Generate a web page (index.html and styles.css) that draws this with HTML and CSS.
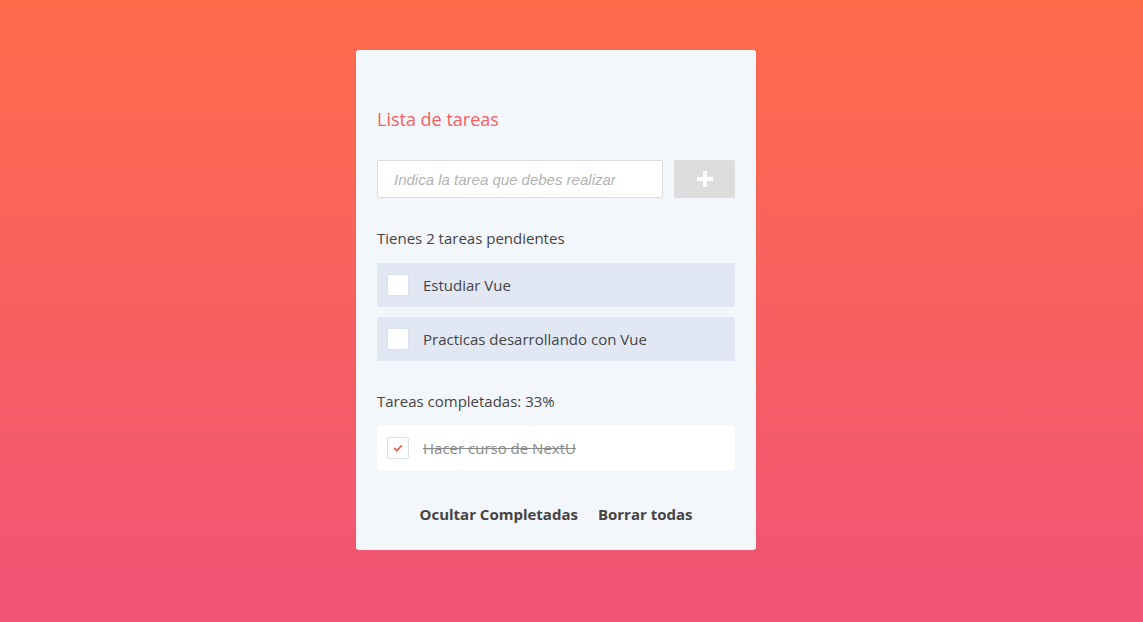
FILE: index.html
```html
<!DOCTYPE html>
<html lang="es">
<head>
<meta charset="utf-8">
<title>Lista de tareas</title>
<link rel="stylesheet" href="styles.css">
</head>
<body>
<main class="page">
  <section class="card">
    <h1 class="title">Lista de tareas</h1>
    <form class="add-row">
      <input class="task-input" type="text" placeholder="Indica la tarea que debes realizar">
      <button class="add-btn" type="button" aria-label="Añadir">
        <svg width="18" height="18" viewBox="0 0 18 18"><path d="M9 1v16M1 9h16" stroke="#fff" stroke-width="4"/></svg>
      </button>
    </form>
    <p class="label">Tienes 2 tareas pendientes</p>
    <ul class="list">
      <li class="item"><span class="check"></span><span class="text">Estudiar Vue</span></li>
      <li class="item"><span class="check"></span><span class="text">Practicas desarrollando con Vue</span></li>
    </ul>
    <p class="label label-done">Tareas completadas: 33%</p>
    <ul class="list">
      <li class="item item-done"><span class="check checked"><svg width="10" height="8" viewBox="0 0 10 8"><path d="M1.2 4l2.6 2.6L8.8 1.4" fill="none" stroke="#f4664f" stroke-width="2"/></svg></span><span class="text">Hacer curso de NextU</span></li>
    </ul>
    <div class="actions">
      <button class="link-btn" type="button">Ocultar Completadas</button>
      <button class="link-btn" type="button">Borrar todas</button>
    </div>
  </section>
</main>
</body>
</html>
```
FILE: styles.css
```css
* { box-sizing: border-box; }
html, body { margin: 0; height: 100%; }
body {
  background: linear-gradient(180deg, #fe6c4b 0%, #f05476 100%);
  font-family: "Open Sans", "Liberation Sans", sans-serif;
  color: #444;
}
.page {
  display: flex;
  justify-content: center;
  padding: 50px 31px 0 0;
}
.card {
  width: 400px;
  height: 500px;
  background: #f3f6fb;
  border-radius: 3px;
  padding: 54px 21px 0;
}
.title {
  margin: 0;
  font-size: 18px;
  font-weight: 400;
  line-height: 30px;
  color: #f45f63;
}
.add-row {
  display: flex;
  gap: 11px;
  margin: 26px 0 0;
}
.task-input {
  width: 286px;
  height: 38px;
  border: 1px solid #d9dde3;
  border-radius: 2px;
  background: #fff;
  padding: 0 16px;
  font-family: "Liberation Sans", Arial, sans-serif;
  font-size: 15px;
  font-style: italic;
  color: #555;
  outline: none;
}
.task-input::placeholder { color: #b3b3b3; }
.add-btn {
  width: 61px;
  height: 38px;
  border: none;
  border-radius: 2px;
  background: #dddddd;
  display: flex;
  align-items: center;
  justify-content: center;
  padding: 0;
}
.label {
  margin: 28px 0 0;
  font-size: 15px;
  line-height: 24px;
  color: #444;
}
.label-done { margin-top: 28px; }
.list {
  list-style: none;
  margin: 13px 0 0;
  padding: 0;
  display: flex;
  flex-direction: column;
  gap: 10px;
}
.item {
  height: 44px;
  background: #e1e8f4;
  border-radius: 3px;
  display: flex;
  align-items: center;
  padding-left: 10px;
  font-size: 15px;
  color: #444;
}
.item-done { background: #fff; }
.check {
  width: 22px;
  height: 22px;
  background: #fff;
  border: 1px solid #d8e0eb;
  border-radius: 2px;
  margin-right: 14px;
  display: flex;
  align-items: center;
  justify-content: center;
}
.item-done .text {
  color: #888;
  text-decoration: line-through;
}
.actions {
  display: flex;
  justify-content: center;
  gap: 20px;
  margin-top: 32px;
}
.link-btn {
  background: none;
  border: none;
  padding: 0;
  font-family: "Open Sans", "Liberation Sans", sans-serif;
  font-size: 15px;
  font-weight: 700;
  color: #444;
  line-height: 24px;
}
```
